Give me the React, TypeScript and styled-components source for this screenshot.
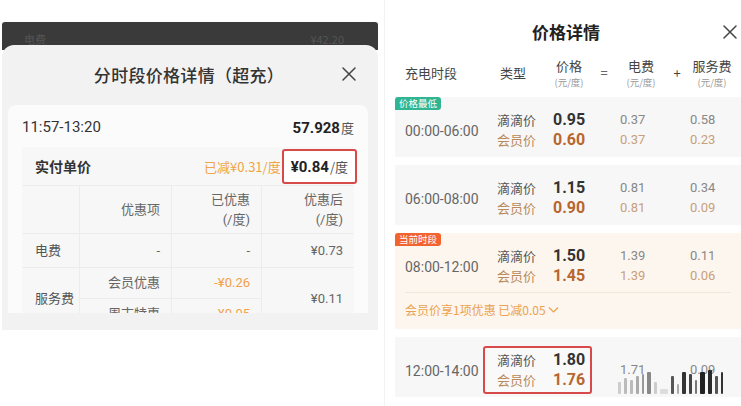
import styled, { createGlobalStyle } from 'styled-components';

const GlobalStyle = createGlobalStyle`
  html, body {
    margin: 0;
    padding: 0;
    background: #fff;
  }
  body {
    font-family: "Noto Sans CJK SC", "Noto Sans", sans-serif;
  }
  * {
    box-sizing: border-box;
  }
`;

const NUM_FONT = `Roboto, "Noto Sans CJK SC", sans-serif`;

const Page = styled.div`
  width: 741px;
  height: 406px;
  display: flex;
  overflow: hidden;
  background: #fff;
`;

/* ---------- left screenshot ---------- */

const LeftCol = styled.div`
  width: 380px;
  flex-shrink: 0;
  padding: 22px 2px 0;
`;

const DarkStrip = styled.div`
  height: 28px;
  background: #3a3a3a;
  display: flex;
  justify-content: space-between;
  padding: 9px 34px 0 22px;
  font-size: 11px;
  color: #555;
  border-radius: 3px 3px 0 0;
`;

const Sheet = styled.div`
  position: relative;
  margin-top: -5px;
  background: #f2f2f2;
  border-radius: 12px 12px 0 0;
  padding-bottom: 17px;
`;

const SheetHeader = styled.div`
  height: 58px;
  display: grid;
  grid-template-columns: 1fr auto 1fr;
  align-items: center;
  padding: 0 22px 0 20px;
`;

const SheetTitle = styled.div`
  grid-column: 2;
  font-size: 17px;
  font-weight: 500;
  color: #333;
  letter-spacing: 0.3px;
`;

const CloseBtn = styled.div`
  justify-self: end;
  display: flex;
  color: #444;
`;

const Card = styled.div`
  margin: 2px 10px 0 6px;
  height: 208px;
  overflow: hidden;
  background: #fbfbfb;
  border-radius: 8px 8px 0 0;
  padding-top: 8px;
`;

const TopRow = styled.div`
  height: 28px;
  padding: 0 14px;
  display: flex;
  justify-content: space-between;
  align-items: center;
  font-family: ${NUM_FONT};
  font-size: 15px;
  color: #333;
`;

const Energy = styled.span`
  font-weight: 700;
  color: #222;
  font-size: 15px;
`;

const Unit = styled.span`
  font-size: 13px;
  color: #555;
  font-weight: 400;
  margin-left: 1px;
`;

const PaySection = styled.div`
  margin: 6px 0 0 14px;
  width: 332px;
  background: #f7f7f7;
`;

const PayRow = styled.div`
  height: 38px;
  display: flex;
  align-items: center;
  padding-left: 13px;
`;

const PayLabel = styled.div`
  flex: 1;
  font-size: 14px;
  font-weight: 700;
  color: #333;
`;

const Saved = styled.div`
  font-size: 13px;
  color: #f0a445;
`;

const PriceBox = styled.div`
  margin-right: -3px;
  margin-left: 1px;
  border: 2px solid #d84a4a;
  border-radius: 3px;
  padding: 4px 7px 4px 7px;
  line-height: 21px;
  background: #fff;
`;

const PayPrice = styled.span`
  font-family: ${NUM_FONT};
  font-size: 15px;
  font-weight: 700;
  color: #222;
`;

const Table = styled.div`
  display: grid;
  grid-template-columns: 58px 92px 90px 92px;
  grid-template-rows: 48px 34px 31px 31px;
`;

const Cell = styled.div<{ $align?: 'left' | 'right'; $tone?: 'label' | 'text' | 'orange'; $rows?: number; $last?: boolean }>`
  display: flex;
  flex-direction: column;
  justify-content: center;
  align-items: ${(p) => (p.$align === 'left' ? 'flex-start' : 'flex-end')};
  text-align: ${(p) => p.$align ?? 'right'};
  padding: ${(p) => (p.$align === 'left' ? '0 0 0 13px' : '0 11px 0 0')};
  font-size: 13px;
  line-height: 20px;
  font-family: ${NUM_FONT};
  color: ${(p) => (p.$tone === 'orange' ? '#f2a04c' : p.$tone === 'label' ? '#555' : '#666')};
  border-top: 1px solid #ececec;
  border-right: ${(p) => (p.$last ? 'none' : '1px solid #ececec')};
  grid-row: ${(p) => (p.$rows ? `span ${p.$rows}` : 'auto')};
`;

/* ---------- right screenshot ---------- */

const RightCol = styled.div`
  position: relative;
  flex: 1;
  margin-left: 4px;
  border-left: 1px solid #f2f2f2;
  padding-left: 10px;
`;

const TitleBar = styled.div`
  height: 57px;
  padding: 6px 4px 0 0;
  display: grid;
  grid-template-columns: 1fr auto 1fr;
  align-items: center;
`;

const PanelTitle = styled.div`
  grid-column: 2;
  font-size: 17px;
  font-weight: 700;
  color: #222;
`;

const PanelClose = styled.div`
  justify-self: end;
  display: flex;
  color: #444;
`;

const ColHeader = styled.div`
  height: 32px;
  display: grid;
  grid-template-columns: 95px 45px 48px 22px 52px 20px 50px;
  align-items: center;
  padding-left: 10px;
  font-size: 13px;
  color: #444;
`;

const HeadCell = styled.div<{ $center?: boolean }>`
  display: flex;
  flex-direction: column;
  align-items: ${(p) => (p.$center ? 'center' : 'flex-start')};
  line-height: 18px;
`;

const SubUnit = styled.span`
  font-size: 9.5px;
  line-height: 14px;
  color: #999;
`;

const Rows = styled.div`
  margin-top: 8px;
  display: flex;
  flex-direction: column;
  gap: 8px;
`;

const Row = styled.div<{ $tone: 'plain' | 'current' }>`
  position: relative;
  background: ${(p) => (p.$tone === 'current' ? '#fdf6ee' : '#f7f7f7')};
  padding: 9px 0 3px 10px;
`;

const RowMain = styled.div`
  display: grid;
  grid-template-columns: 78px 137px 70px 1fr;
  align-items: center;
`;

const Badge = styled.div<{ $color: string }>`
  position: absolute;
  top: 0;
  left: 0;
  height: 13px;
  padding: 0 4px;
  line-height: 13px;
  font-size: 9.5px;
  color: #fff;
  background: ${(p) => p.$color};
  border-radius: 3px 3px 3px 0;
`;

const Time = styled.div`
  font-family: ${NUM_FONT};
  font-size: 14px;
  color: #666;
  margin-top: 2px;
`;

const PriceGroup = styled.div<{ $highlight?: boolean }>`
  display: grid;
  grid-template-columns: 56px 37px;
  width: 109px;
  padding: 2px 0 2px 12px;
  border: 2px solid ${(p) => (p.$highlight ? '#d84a4a' : 'transparent')};
  border-radius: 3px;
  background: ${(p) => (p.$highlight ? '#f9f9f9' : 'transparent')};
`;

const Lines = styled.div`
  display: flex;
  flex-direction: column;
  line-height: 20px;
`;

const TypeLine = styled.span<{ $member?: boolean }>`
  font-size: 13px;
  color: ${(p) => (p.$member ? '#b98a5c' : '#555')};
`;

const PriceLine = styled.span<{ $member?: boolean }>`
  font-family: ${NUM_FONT};
  font-size: 16px;
  font-weight: 700;
  color: ${(p) => (p.$member ? '#b8662e' : '#333')};
`;

const ValueLine = styled.span<{ $member?: boolean }>`
  font-family: ${NUM_FONT};
  font-size: 13px;
  color: ${(p) => (p.$member ? '#c7a07c' : '#888')};
`;

const PromoBar = styled.div`
  margin: 2px 10px 0 0;
  border-top: 1px solid #f1e7da;
  padding: 8px 0 7px;
  font-size: 12px;
  line-height: 18px;
  color: #eba24f;
  display: flex;
  align-items: center;
  gap: 2px;
`;

const Watermark = styled.div`
  position: absolute;
  right: 18px;
  bottom: 12px;
  display: flex;
  align-items: flex-end;
  gap: 3px;
  height: 26px;
`;

const Bar = styled.span<{ $w: number; $h: number; $shade: string }>`
  display: inline-block;
  width: ${(p) => p.$w}px;
  height: ${(p) => p.$h}px;
  background: ${(p) => p.$shade};
  border-radius: 1px;
`;

const XIcon = ({ size = 14 }: { size?: number }) => (
  <svg width={size} height={size} viewBox="0 0 14 14" fill="none">
    <path d="M1 1L13 13M13 1L1 13" stroke="currentColor" strokeWidth="1.5" strokeLinecap="round" />
  </svg>
);

const Chevron = () => (
  <svg width="11" height="8" viewBox="0 0 11 8" fill="none">
    <path d="M1 1.5L5.5 6L10 1.5" stroke="#eba24f" strokeWidth="1.2" />
  </svg>
);

type PriceRow = {
  time: string;
  badge?: { text: string; color: string };
  tone: 'plain' | 'current';
  price: string[];
  elec: string[];
  svc: string[];
  promo?: string;
  highlight?: boolean;
};

const rows: PriceRow[] = [
  { time: '00:00-06:00', badge: { text: '价格最低', color: '#2fb592' }, tone: 'plain', price: ['0.95', '0.60'], elec: ['0.37', '0.37'], svc: ['0.58', '0.23'] },
  { time: '06:00-08:00', tone: 'plain', price: ['1.15', '0.90'], elec: ['0.81', '0.81'], svc: ['0.34', '0.09'] },
  { time: '08:00-12:00', badge: { text: '当前时段', color: '#f2632f' }, tone: 'current', price: ['1.50', '1.45'], elec: ['1.39', '1.39'], svc: ['0.11', '0.06'], promo: '会员价享1项优惠 已减0.05' },
  { time: '12:00-14:00', tone: 'plain', price: ['1.80', '1.76'], elec: ['1.71'], svc: ['0.09'], highlight: true },
];

const marks: [number, number, string][] = [
  [3, 12, '#ccc'], [3, 16, '#bbb'], [3, 14, '#bbb'], [3, 18, '#aaa'], [2, 20, '#999'], [4, 22, '#888'], [3, 12, '#ccc'],
  [8, 5, '#ddd'], [3, 18, '#555'], [2, 10, '#aaa'], [4, 22, '#333'], [3, 20, '#444'],
  [2, 14, '#777'], [5, 22, '#222'], [4, 24, '#2a2a2a'], [3, 18, '#555'], [2, 22, '#333'],
];

export default function App() {
  return (
    <>
      <GlobalStyle />
      <Page>
        <LeftCol>
          <DarkStrip>
            <span>电费</span>
            <span>¥42.20</span>
          </DarkStrip>
          <Sheet>
            <SheetHeader>
              <SheetTitle>分时段价格详情（超充）</SheetTitle>
              <CloseBtn>
                <XIcon size={14} />
              </CloseBtn>
            </SheetHeader>
            <Card>
              <TopRow>
                <span>11:57-13:20</span>
                <span>
                  <Energy>57.928</Energy>
                  <Unit>度</Unit>
                </span>
              </TopRow>
              <PaySection>
                <PayRow>
                  <PayLabel>实付单价</PayLabel>
                  <Saved>已减¥0.31/度</Saved>
                  <PriceBox>
                    <PayPrice>¥0.84</PayPrice>
                    <Unit>/度</Unit>
                  </PriceBox>
                </PayRow>
                <Table>
                  <Cell $align="left" />
                  <Cell>优惠项</Cell>
                  <Cell>
                    <span>已优惠</span>
                    <span>(/度)</span>
                  </Cell>
                  <Cell $last>
                    <span>优惠后</span>
                    <span>(/度)</span>
                  </Cell>

                  <Cell $align="left" $tone="label">电费</Cell>
                  <Cell>-</Cell>
                  <Cell>-</Cell>
                  <Cell $last>¥0.73</Cell>

                  <Cell $align="left" $tone="label" $rows={2}>服务费</Cell>
                  <Cell>会员优惠</Cell>
                  <Cell $tone="orange">-¥0.26</Cell>
                  <Cell $last $rows={2}>¥0.11</Cell>
                  <Cell>周末特惠</Cell>
                  <Cell $tone="orange">-¥0.05</Cell>
                </Table>
              </PaySection>
            </Card>
          </Sheet>
        </LeftCol>

        <RightCol>
          <TitleBar>
            <PanelTitle>价格详情</PanelTitle>
            <PanelClose>
              <XIcon size={14} />
            </PanelClose>
          </TitleBar>
          <ColHeader>
            <HeadCell>充电时段</HeadCell>
            <HeadCell>类型</HeadCell>
            <HeadCell $center>
              <span>价格</span>
              <SubUnit>(元/度)</SubUnit>
            </HeadCell>
            <HeadCell $center>=</HeadCell>
            <HeadCell $center>
              <span>电费</span>
              <SubUnit>(元/度)</SubUnit>
            </HeadCell>
            <HeadCell $center>+</HeadCell>
            <HeadCell $center>
              <span>服务费</span>
              <SubUnit>(元/度)</SubUnit>
            </HeadCell>
          </ColHeader>
          <Rows>
            {rows.map((r) => (
              <Row key={r.time} $tone={r.tone}>
                {r.badge && <Badge $color={r.badge.color}>{r.badge.text}</Badge>}
                <RowMain>
                  <Time>{r.time}</Time>
                  <PriceGroup $highlight={r.highlight}>
                    <Lines>
                      <TypeLine>滴滴价</TypeLine>
                      <TypeLine $member>会员价</TypeLine>
                    </Lines>
                    <Lines>
                      <PriceLine>{r.price[0]}</PriceLine>
                      <PriceLine $member>{r.price[1]}</PriceLine>
                    </Lines>
                  </PriceGroup>
                  <Lines>
                    {r.elec.map((v, i) => (
                      <ValueLine key={i} $member={i === 1}>{v}</ValueLine>
                    ))}
                  </Lines>
                  <Lines>
                    {r.svc.map((v, i) => (
                      <ValueLine key={i} $member={i === 1}>{v}</ValueLine>
                    ))}
                  </Lines>
                </RowMain>
                {r.promo && (
                  <PromoBar>
                    <span>{r.promo}</span>
                    <Chevron />
                  </PromoBar>
                )}
              </Row>
            ))}
          </Rows>
          <Watermark>
            {marks.map(([w, h, c], i) => (
              <Bar key={i} $w={w} $h={h} $shade={c} />
            ))}
          </Watermark>
        </RightCol>
      </Page>
    </>
  );
}
